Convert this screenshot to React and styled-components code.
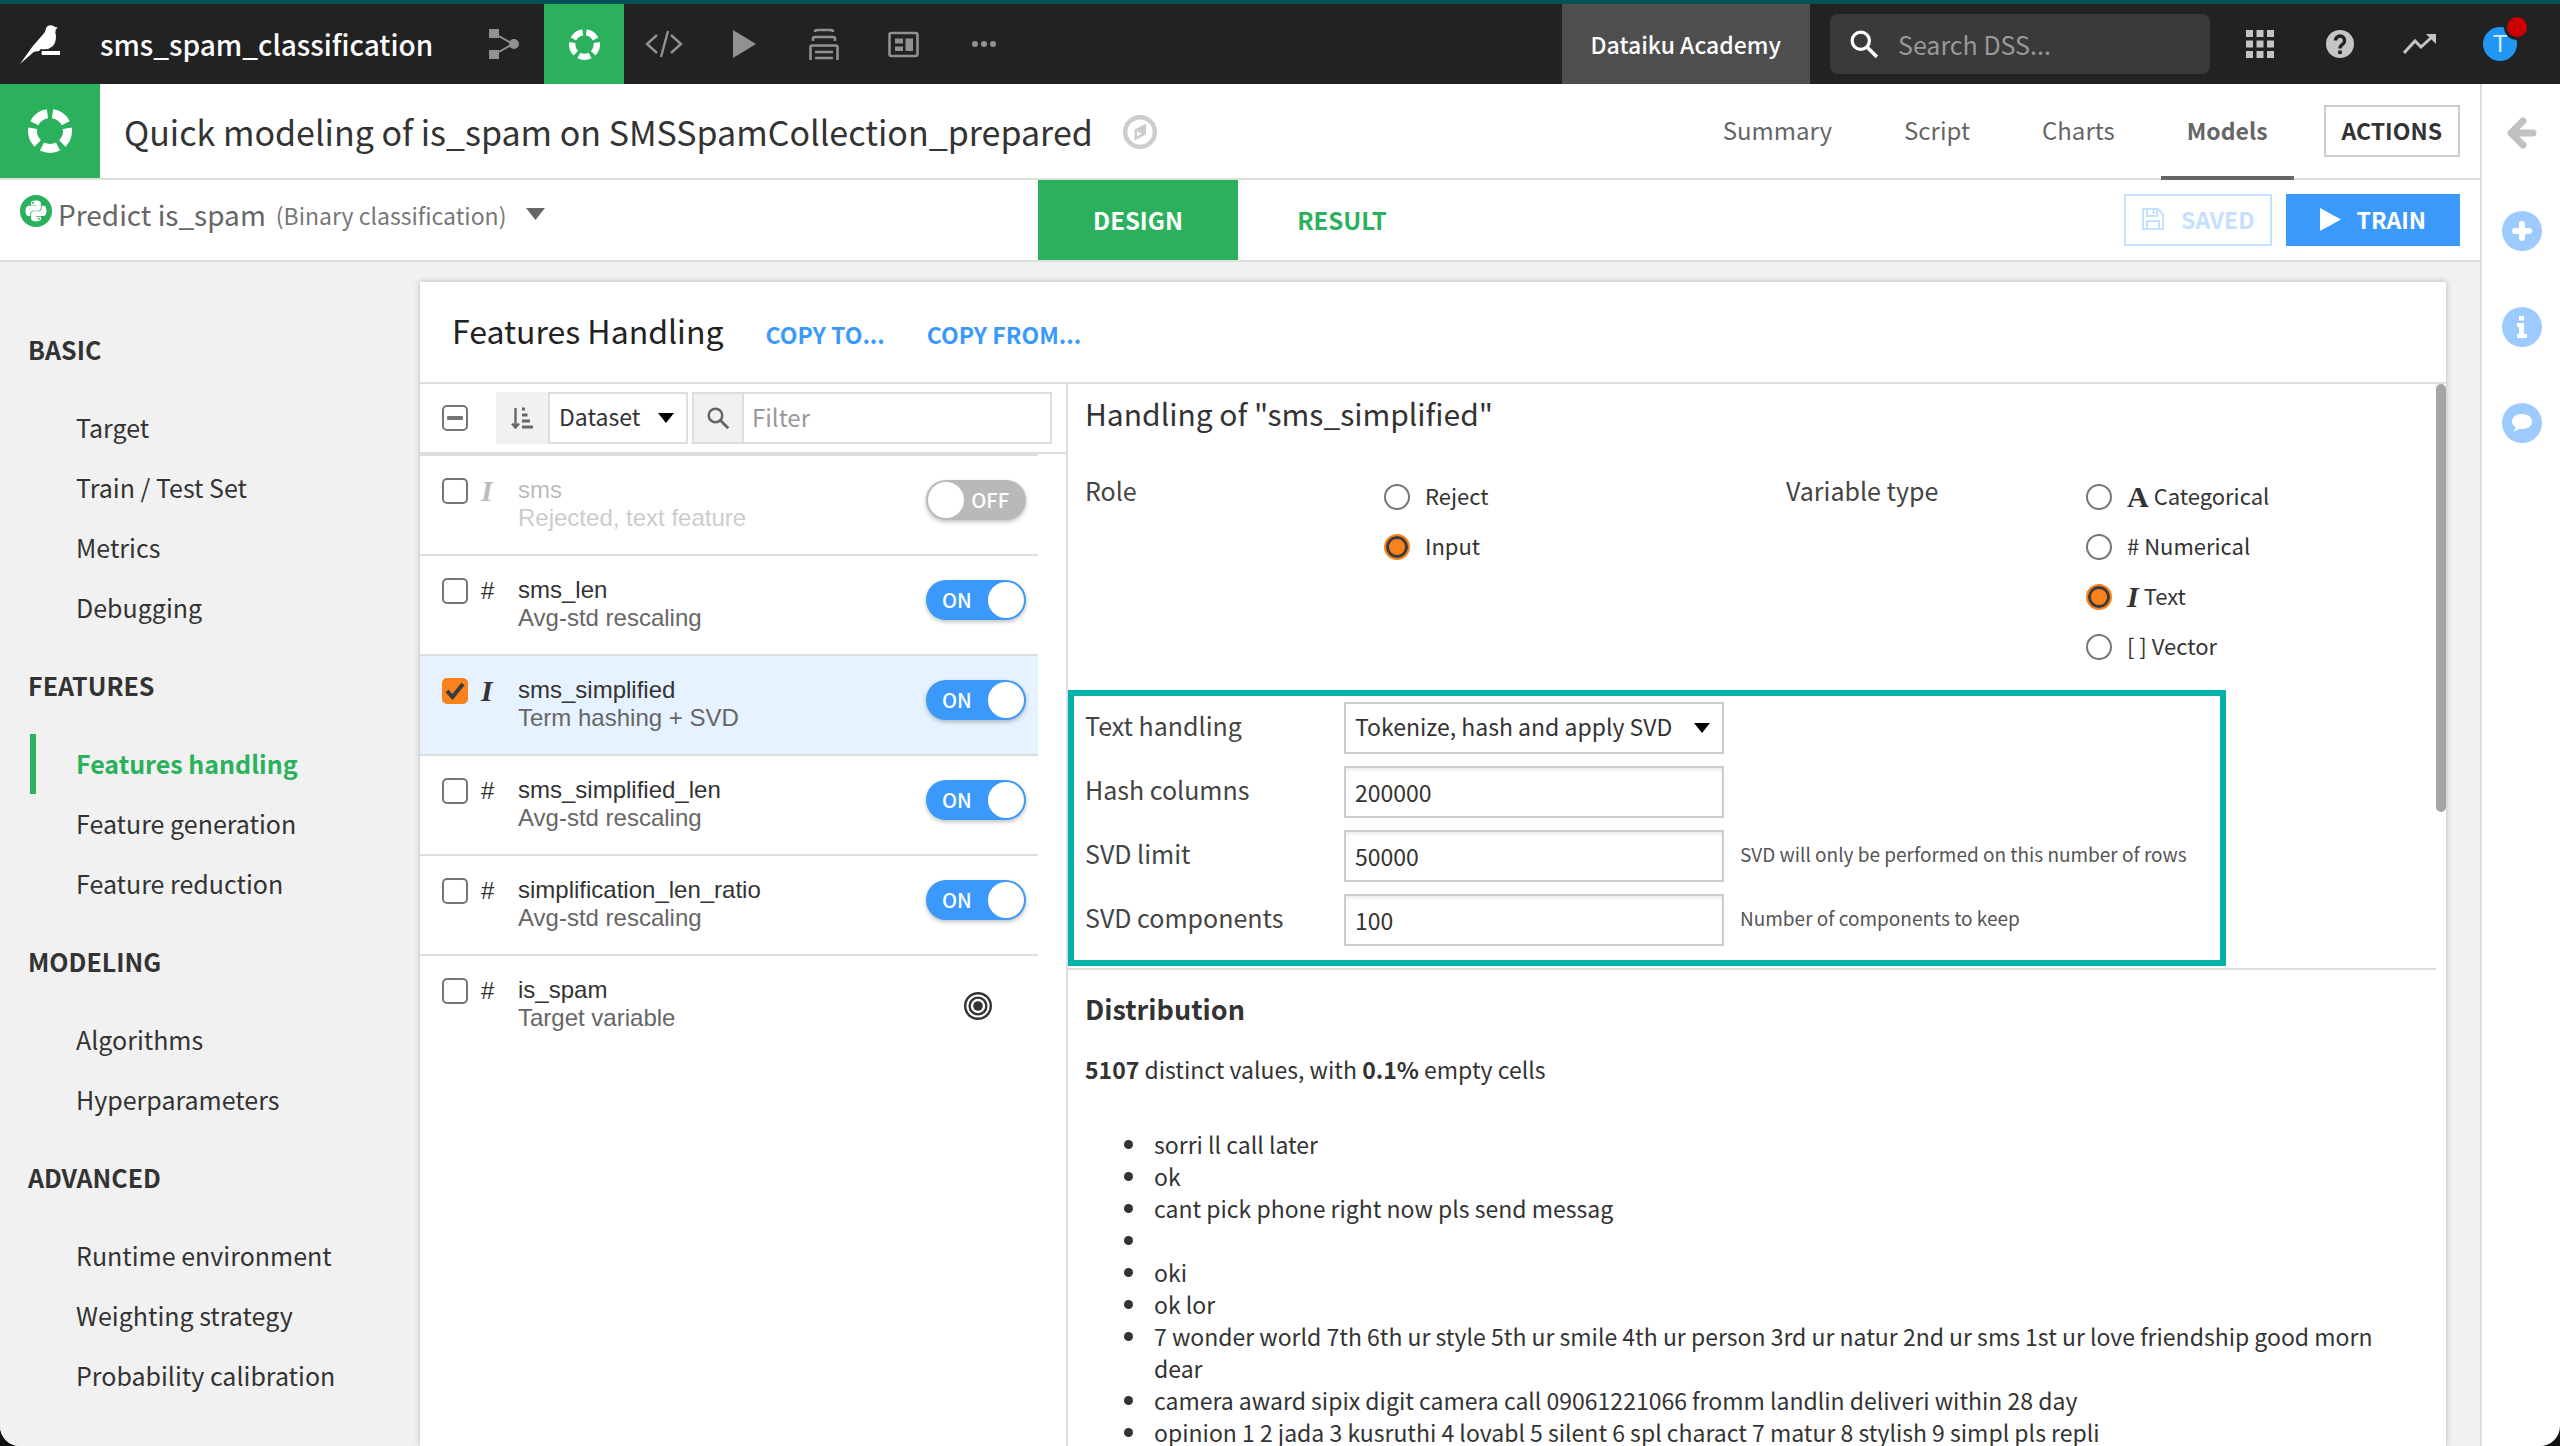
import React, { useState } from "react";
import styled, { createGlobalStyle, css } from "styled-components";
import { FaPython } from "react-icons/fa";

const sans = '"Noto Sans CJK SC", "Noto Sans", sans-serif';
const arial = '"Liberation Sans", Arial, sans-serif';
const serif = '"Liberation Serif", "Times New Roman", serif';

const green = "#2bb05c";
const blue = "#3b99fc";
const line = "#dddddd";
const ink = "#333333";

const GlobalStyle = createGlobalStyle`
  *, *::before, *::after { box-sizing: border-box; }
  body { margin: 0; background: #111111; }
  button, input, select { font: inherit; color: inherit; margin: 0; }
  button { cursor: pointer; }
  a { color: inherit; text-decoration: none; }
  h1, h2, h3, p, ul, fieldset { margin: 0; padding: 0; border: 0; font-weight: 400; }
  svg { display: block; flex: none; }
`;

const Window = styled.div`
  display: flex;
  flex-direction: column;
  height: 100vh;
  overflow: hidden;
  border-radius: 0 0 20px 20px;
  background: #ffffff;
  color: ${ink};
  font-family: ${sans};
  font-size: 25px;
  line-height: 32px;
`;

/* Top bar */

const TopBar = styled.header`
  flex: none;
  display: flex;
  align-items: stretch;
  height: 84px;
  padding-right: 20px;
  border-top: 4px solid #025258;
  background: #222222;
  color: #ffffff;
`;

const Brand = styled.a`
  display: flex;
  align-items: center;
  width: 100px;
  padding-left: 20px;
`;

const ProjectName = styled.a`
  display: flex;
  align-items: center;
  width: 364px;
  font-size: 28px;
  font-weight: 500;
`;

const NavButton = styled.a`
  display: flex;
  align-items: center;
  justify-content: center;
  width: 80px;
  color: ${(p) => (p.$active ? "#ffffff" : p.$light ? "#c4c4c4" : "#919191")};
  background: ${(p) => (p.$active ? green : "transparent")};
`;

const Instance = styled.div`
  display: flex;
  align-items: center;
  margin-left: auto;
  margin-right: 20px;
  padding: 0 29px;
  background: #4e4e4e;
  font-size: 23px;
  font-weight: 500;
`;

const GlobalSearch = styled.label`
  display: flex;
  align-items: center;
  gap: 20px;
  width: 380px;
  height: 60px;
  margin: 10px 10px 10px 0;
  padding: 0 20px;
  border-radius: 8px;
  background: #3a3a3a;

  input {
    flex: 1;
    min-width: 0;
    padding: 0;
    border: 0;
    outline: 0;
    background: none;
    font-size: 25px;
  }
  input::placeholder { color: #999999; opacity: 1; }
`;

const Avatar = styled.span`
  position: relative;
  display: flex;
  align-items: center;
  justify-content: center;
  width: 34px;
  height: 34px;
  border-radius: 50%;
  background: #2196f3;
  color: #d6ecff;
  font-family: ${arial};
  font-size: 24px;
`;

const AvatarDot = styled.span`
  position: absolute;
  top: -13px;
  right: -13px;
  width: 26px;
  height: 26px;
  border: 3px solid #222222;
  border-radius: 50%;
  background: #cc0000;
`;

/* Page */

const Page = styled.div`
  flex: 1;
  display: flex;
  min-height: 0;
`;

const Main = styled.main`
  flex: 1;
  display: flex;
  flex-direction: column;
  min-width: 0;
  border-right: 2px solid ${line};
`;

const TitleBar = styled.div`
  flex: none;
  display: flex;
  align-items: stretch;
  height: 96px;
  padding-right: 20px;
  border-bottom: 2px solid ${line};
`;

const TitleIcon = styled.div`
  display: flex;
  align-items: center;
  justify-content: center;
  width: 100px;
  background: ${green};
  color: #ffffff;
`;

const Title = styled.h1`
  display: flex;
  align-items: center;
  gap: 30px;
  padding: 2px 0 0 24px;
  font-size: 34px;
  line-height: 48px;
  white-space: nowrap;
`;

const Tabs = styled.nav`
  display: flex;
  gap: 20px;
  margin: 0 30px -2px auto;
`;

const Tab = styled.a`
  display: flex;
  align-items: center;
  padding: 0 26px;
  border-bottom: 4px solid ${(p) => (p.$active ? "#666666" : "transparent")};
  color: #666666;
  font-size: ${(p) => (p.$active ? 23 : 24)}px;
  font-weight: ${(p) => (p.$active ? 700 : 400)};
`;

const Button = styled.button`
  display: flex;
  align-items: center;
  justify-content: center;
  align-self: center;
  gap: 16px;
  height: 52px;
  padding: 0 ${(p) => p.$pad || 16}px 2px;
  border: 2px solid #cccccc;
  background: #ffffff;
  font-size: 23px;
  font-weight: 700;

  ${(p) =>
    p.$kind === "saved" &&
    css`
      border-color: #c4e0fe;
      color: #c4e0fe;
    `}
  ${(p) =>
    p.$kind === "primary" &&
    css`
      border-color: ${blue};
      background: ${blue};
      color: #ffffff;
    `}
`;

const TaskBar = styled.div`
  flex: none;
  display: grid;
  grid-template-columns: 1fr auto 1fr;
  height: 82px;
  border-bottom: 2px solid ${line};
`;

const TaskPicker = styled.button`
  display: flex;
  align-items: center;
  justify-self: start;
  padding: 0 0 12px 20px;
  border: 0;
  background: none;
  color: #666666;
  font-size: 28px;

  small {
    margin: 2px 20px 0 10px;
    color: #777777;
    font-size: 23px;
  }
`;

const PythonBadge = styled.span`
  display: flex;
  align-items: center;
  justify-content: center;
  width: 32px;
  height: 32px;
  margin: 0 6px 6px 0;
  border-radius: 50%;
  background: ${green};
  color: #ffffff;
`;

const ModeTabs = styled.div`
  display: flex;
  gap: 4px;
`;

const ModeTab = styled.button`
  width: 200px;
  border: 0;
  background: ${(p) => (p.$active ? green : "transparent")};
  color: ${(p) => (p.$active ? "#ffffff" : green)};
  font-size: 24px;
  font-weight: 700;
`;

const TaskActions = styled.div`
  display: flex;
  justify-content: flex-end;
  gap: 14px;
  padding-right: 20px;
`;

const SideRail = styled.aside`
  display: flex;
  flex-direction: column;
  align-items: center;
  gap: 56px;
  width: 78px;
  padding: 27px 0 0 2px;
`;

const RailButton = styled.button`
  display: flex;
  align-items: center;
  justify-content: center;
  width: 40px;
  height: 40px;
  padding: 0;
  border: 0;
  border-radius: 50%;
  background: ${(p) => (p.$plain ? "transparent" : "#9dcbff")};
  color: #ffffff;
`;

const RailTop = styled.div`
  display: flex;
  height: 44px;
  align-items: center;
`;

/* Body */

const Body = styled.div`
  flex: 1;
  display: flex;
  min-height: 0;
  padding-right: 34px;
  background: #f1f1f1;
`;

const Sidebar = styled.nav`
  flex: none;
  width: 420px;
  padding: 40px 0 0 30px;
  overflow: hidden;
`;

const SideHeading = styled.h2`
  height: 96px;
  font-size: 25px;
  font-weight: 700;
  line-height: 95px;
  margin-left: -2px;
`;

const SideLink = styled.a`
  display: block;
  height: 60px;
  padding-left: 40px;
  border-left: 6px solid ${(p) => (p.$active ? green : "transparent")};
  color: ${(p) => (p.$active ? green : "inherit")};
  font-weight: ${(p) => (p.$active ? 700 : 400)};
  line-height: 59px;
`;

const Card = styled.section`
  flex: 1;
  display: flex;
  flex-direction: column;
  min-width: 0;
  margin-top: 20px;
  background: #ffffff;
  box-shadow: 0 0 6px rgba(0, 0, 0, 0.25);
`;

const CardHeader = styled.div`
  flex: none;
  display: flex;
  align-items: baseline;
  gap: 42px;
  height: 102px;
  padding: 28px 32px 0;
  border-bottom: 2px solid ${line};
`;

const CardTitle = styled.h2`
  color: #222222;
  font-size: 32px;
  line-height: 40px;
`;

const TextButton = styled.button`
  padding: 0;
  border: 0;
  background: none;
  color: ${blue};
  font-size: 23px;
  font-weight: 700;
`;

const Split = styled.div`
  flex: 1;
  display: flex;
  min-height: 0;
`;

/* Feature list */

const FeaturePane = styled.div`
  flex: none;
  width: 648px;
  border-right: 2px solid ${line};
`;

const Toolbar = styled.div`
  display: flex;
  align-items: center;
  height: 70px;
  padding: 0 14px 0 22px;
  border-bottom: 2px solid ${line};
`;

const CheckWrap = styled.span`
  display: grid;
  flex: none;
  width: 26px;
  height: 26px;
  place-items: center;

  > * { grid-area: 1 / 1; }
  > svg { pointer-events: none; z-index: 1; }
`;

const CheckInput = styled.input`
  appearance: none;
  width: 26px;
  height: 26px;
  border: 2px solid #767676;
  border-radius: 5px;
  background: #ffffff;

  &:checked {
    border-color: #f9821c;
    background: #f9821c;
  }
`;

const Addon = styled.span`
  flex: none;
  display: flex;
  align-items: center;
  justify-content: center;
  width: ${(p) => (p.$bordered ? 50 : 52)}px;
  height: 52px;
  border: ${(p) => (p.$bordered ? `2px solid ${line}` : "0")};
  border-right: 0;
  background: #f1f1f1;
  color: #666666;
`;

const SortGroup = styled.div`
  display: flex;
  margin: 0 4px 0 28px;
`;

const FilterGroup = styled.label`
  flex: 1;
  display: flex;
  min-width: 0;

  input {
    flex: 1;
    min-width: 0;
    height: 52px;
    padding: 0 8px 4px;
    border: 2px solid ${line};
    background: #ffffff;
    font-size: 24px;
  }
  input::placeholder { color: #999999; opacity: 1; }
`;

const SelectWrap = styled.span`
  display: grid;
  width: ${(p) => p.$width}px;
  align-items: center;

  > * { grid-area: 1 / 1; }
  > svg { justify-self: end; margin-right: 14px; pointer-events: none; }
`;

const Select = styled.select`
  appearance: none;
  width: 100%;
  height: 52px;
  padding: 0 36px 4px 9px;
  border: 2px solid ${(p) => p.$border || line};
  border-radius: 0;
  background: #ffffff;
  font-size: 23px;
`;

const FeatureList = styled.ul`
  list-style: none;
  margin-right: 28px;
`;

const FeatureRow = styled.li`
  display: flex;
  align-items: flex-start;
  height: 100px;
  padding: 22px 12px 0 22px;
  background: ${(p) => (p.$selected ? "#e6f2ff" : "transparent")};
  color: ${(p) => (p.$off ? "#bbbbbb" : ink)};
  font-family: ${arial};
  font-size: 24px;
  line-height: 28px;
  border-top: 2px solid ${line};
`;

const TypeMark = styled.span`
  flex: none;
  width: 50px;
  padding-left: 13px;
  font-family: ${(p) => (p.$serif ? serif : arial)};
  font-size: ${(p) => (p.$serif ? 30 : 24)}px;
  font-style: ${(p) => (p.$serif ? "italic" : "normal")};
  font-weight: ${(p) => (p.$serif ? 700 : 400)};
  line-height: 26px;
`;

const FeatureText = styled.div`
  flex: 1;
  min-width: 0;
  margin-top: -2px;

  small {
    display: block;
    font-size: 24px;
    color: ${(p) => (p.$off ? "#cccccc" : "#666666")};
  }
`;

const Toggle = styled.label`
  flex: none;
  display: flex;
  align-items: center;
  justify-content: space-between;
  flex-direction: ${(p) => (p.$on ? "row" : "row-reverse")};
  width: 100px;
  height: 40px;
  margin-top: 2px;
  padding: 2px ${(p) => (p.$on ? 2 : 17)}px 2px ${(p) => (p.$on ? 16 : 2)}px;
  border-radius: 20px;
  background: ${(p) => (p.$on ? blue : "#b9b9b9")};
  box-shadow: 0 2px 4px rgba(0, 0, 0, 0.25);
  color: #ffffff;
  font-family: ${sans};
  font-size: 20px;
  font-weight: 500;

  input {
    appearance: none;
    width: 36px;
    height: 36px;
    border-radius: 50%;
    background: #ffffff;
  }
`;

const TargetMark = styled.span`
  margin: 14px 34px 0 0;
`;

/* Detail pane */

const Detail = styled.div`
  position: relative;
  flex: 1;
  min-width: 0;
  overflow: hidden;
  padding-right: 10px;
`;

const ScrollThumb = styled.span`
  position: absolute;
  top: 0;
  right: 0;
  width: 10px;
  height: 428px;
  border-radius: 5px;
  background: #a5a5a5;
`;

const DetailTitle = styled.h2`
  padding: 9px 17px 39px;
  font-size: 30px;
  line-height: 40px;
`;

const Roles = styled.div`
  display: grid;
  grid-template-columns: 299px 402px 300px 1fr;
  min-height: 218px;
  padding-left: 17px;
`;

const FieldName = styled.span`
  padding-top: 2px;
  color: #444444;
`;

const RadioOption = styled.label`
  display: flex;
  align-items: center;
  height: 50px;
  font-size: 22px;

  input {
    appearance: none;
    width: 26px;
    height: 26px;
    margin-right: 15px;
    border: 2px solid #767676;
    border-radius: 50%;
    background: #ffffff;
  }
  input:checked {
    border-color: #f9821c;
    background: #f9821c;
    box-shadow: inset 0 0 0 3px #3c3c3c;
  }
  b {
    margin-right: 5px;
    font-family: ${serif};
    font-size: 30px;
  }
  i { font-style: italic; }
  span { padding-bottom: 4px; white-space: pre; }
`;

const Highlight = styled.div`
  display: flex;
  flex-direction: column;
  gap: 12px;
  max-width: 1158px;
  padding: 6px 11px 14px;
  border: 6px solid #00b2a9;
`;

const FormRow = styled.div`
  display: grid;
  grid-template-columns: 259px 380px 1fr;
  align-items: center;

  label { padding-bottom: 6px; color: #444444; }
`;

const TextInput = styled.input`
  width: 100%;
  height: 52px;
  padding: 0 9px;
  border: 2px solid #cccccc;
  background: #ffffff;
  box-shadow: inset 0 2px 3px rgba(0, 0, 0, 0.08);
  font-size: 23px;
`;

const Hint = styled.span`
  padding: 0 0 4px 16px;
  color: #555555;
  font-size: 19px;
`;

const Distribution = styled.section`
  margin-top: 2px;
  padding: 19px 10px 0 17px;
  border-top: 2px solid ${line};
  font-size: 23px;

  h3 {
    margin-bottom: 24px;
    font-size: 27px;
    font-weight: 700;
    line-height: 40px;
  }
  b { font-weight: 700; }
  ul {
    margin-top: 43px;
    padding-left: 64px;
  }
  li {
    min-height: 32px;
    padding-left: 5px;
  }
`;

/* Icons */

const Bird = () => (
  <svg width="40" height="39" viewBox="30 24 120 117" fill="#fff" aria-hidden="true">
    <path d="M30 141 L62 96 Q70 84 80 74 L100 51 Q106 44 107 38 Q109 25 122 24.500 Q130 24.500 134 29 L143 32 L137 38 Q135 46 138 58 Q138 78 128 88 Q118 97 104 97 L90 97 L88 102 L72 104 Z" />
    <path d="M95 102h55v12H95z" />
  </svg>
);

const Ring = ({ size }) => (
  <svg width={size} height={size} viewBox="0 0 44 44" fill="none" aria-hidden="true">
    <circle
      cx="22" cy="22" r="17.500" stroke="currentColor" strokeWidth="9"
      pathLength="100" strokeDasharray="15.200 4.800" strokeDashoffset="-2.400"
      transform="rotate(-90 22 22)"
    />
  </svg>
);

const FlowIcon = () => (
  <svg width="32" height="32" viewBox="0 0 32 32" fill="currentColor" aria-hidden="true">
    <path d="M1 1h10v9H1zM1 22h10v9H1z" />
    <path d="M9 7 25 16 9 25" fill="none" stroke="currentColor" strokeWidth="2" />
    <circle cx="26" cy="16" r="5" />
  </svg>
);

const CodeIcon = () => (
  <svg width="38" height="28" viewBox="0 0 38 28" fill="none" stroke="currentColor" strokeWidth="2.400" aria-hidden="true">
    <path d="M12 5 2 14l10 9M26 5l10 9-10 9M23 1l-7 26" />
  </svg>
);

const PlayIcon = ({ w, h }) => (
  <svg width={w} height={h} viewBox="0 0 22 28" preserveAspectRatio="none" fill="currentColor" aria-hidden="true">
    <path d="M0 0 22 14 0 28z" />
  </svg>
);

const JobsIcon = () => (
  <svg width="32" height="32" viewBox="0 0 32 32" fill="none" stroke="currentColor" strokeWidth="2.600" aria-hidden="true">
    <path d="M7 4Q7 2 9 2h14q2 0 2 2M5 13v-2q0-2 2-2h18q2 0 2 2v2M2.500 32V19q0-1.500 2-1.500h23q2 0 2 1.500v13" />
    <path d="M7 24h18M7 30h18" />
  </svg>
);

const DashboardIcon = () => (
  <svg width="32" height="28" viewBox="0 0 32 28" aria-hidden="true">
    <rect x="1.500" y="3" width="28" height="23" rx="2" fill="none" stroke="currentColor" strokeWidth="2.600" />
    <path d="M7 8.500h8v5H7zM7 16.500h8v4.500H7zM17.500 8.500H25V21h-7.500z" fill="currentColor" />
  </svg>
);

const DotsIcon = () => (
  <svg width="24" height="8" viewBox="0 0 24 8" fill="currentColor" aria-hidden="true">
    <circle cx="3" cy="4" r="3" /><circle cx="12" cy="4" r="3" /><circle cx="21" cy="4" r="3" />
  </svg>
);

const SearchIcon = ({ size }) => (
  <svg width={size} height={size} viewBox="0 0 26 26" fill="none" stroke="currentColor" aria-hidden="true">
    <circle cx="10" cy="10" r="8" strokeWidth="3" />
    <path d="m16 16 9 9" strokeWidth="3.400" />
  </svg>
);

const AppsIcon = () => (
  <svg width="28" height="28" viewBox="0 0 28 28" fill="currentColor" aria-hidden="true">
    {[0, 10.5, 21].map((y) =>
      [0, 10.5, 21].map((x) => <rect key={`${x}-${y}`} x={x} y={y} width="7" height="7" />)
    )}
  </svg>
);

const HelpIcon = () => (
  <svg width="28" height="28" viewBox="0 0 28 28" aria-hidden="true">
    <circle cx="14" cy="14" r="14" fill="currentColor" />
    <path d="M9.500 10.500a4.500 4.500 0 1 1 7 3.800Q14 16 14 18.500" fill="none" stroke="#222" strokeWidth="3.400" />
    <rect x="12.200" y="20.500" width="3.600" height="3.600" fill="#222" />
  </svg>
);

const TrendIcon = () => (
  <svg width="34" height="22" viewBox="0 0 34 22" aria-hidden="true">
    <path d="m1 20 11-12 6 6L29 4" fill="none" stroke="currentColor" strokeWidth="3" />
    <path d="M23 1h10v10z" fill="currentColor" />
  </svg>
);

const CompassIcon = () => (
  <svg width="34" height="34" viewBox="0 0 34 34" aria-hidden="true">
    <circle cx="17" cy="17" r="14.800" fill="none" stroke="#ccc" strokeWidth="4.400" />
    <path fillRule="evenodd" d="M23 8.500v11L11.500 25.500v-11zM14 16v5.500l4.500-2.800z" fill="#ccc" />
  </svg>
);

const Caret = ({ w = 16, h = 10, fill = "#000" }) => (
  <svg width={w} height={h} viewBox="0 0 16 10" fill={fill} aria-hidden="true">
    <path d="M0 0h16L8 10z" />
  </svg>
);

const SaveIcon = () => (
  <svg width="24" height="24" viewBox="0 0 24 24" fill="none" stroke="currentColor" strokeWidth="2" aria-hidden="true">
    <path d="M2 2h15l5 5v15H2z" />
    <path d="M6 2v7h10V2M6 22v-8h12v8M12.500 3v4" />
  </svg>
);

const BackArrow = () => (
  <svg width="30" height="32" viewBox="0 0 30 32" fill="none" stroke="#c1c1c1" strokeWidth="7" strokeLinecap="round" strokeLinejoin="round" aria-hidden="true">
    <path d="M16 4 4 16l12 12M6 16h20" />
  </svg>
);

const PlusIcon = () => (
  <svg width="20" height="20" viewBox="0 0 20 20" stroke="currentColor" strokeWidth="6" strokeLinecap="round" aria-hidden="true">
    <path d="M10 3v14M3 10h14" />
  </svg>
);

const InfoIcon = () => (
  <svg width="12" height="22" viewBox="0 0 12 22" fill="currentColor" aria-hidden="true">
    <path d="M3 0h5v4.500H3zM1 7h7v11h3v4H1v-4h2v-7H1z" />
  </svg>
);

const ChatIcon = () => (
  <svg width="22" height="20" viewBox="0 0 22 20" fill="currentColor" aria-hidden="true">
    <path d="M11 1c6 0 10 3 10 7.500S17 16 11 16q-1.500 0-2.500-.3Q6 18 2.500 18.500 4.500 16.500 4.500 14 1 12 1 8.500C1 4 5 1 11 1z" />
  </svg>
);

const SortIcon = () => (
  <svg width="22" height="22" viewBox="0 0 22 22" fill="none" stroke="currentColor" strokeWidth="2.400" aria-hidden="true">
    <path d="M4.500 1v19M1 16.500l3.500 4 3.500-4" />
    <path d="M11 2h3M11 8h5.500M11 14h8M11 20h11" strokeWidth="3" />
  </svg>
);

const CheckIcon = () => (
  <svg width="20" height="18" viewBox="0 0 20 18" fill="none" stroke="#3c3c3c" strokeWidth="4" aria-hidden="true">
    <path d="m2 9 5.500 6L18 2" />
  </svg>
);

const MinusIcon = () => (
  <svg width="16" height="4" viewBox="0 0 16 4" fill="#767676" aria-hidden="true">
    <rect width="16" height="4" rx="1" />
  </svg>
);

const TargetIcon = () => (
  <svg width="28" height="28" viewBox="0 0 28 28" fill="none" stroke="#333" role="img" aria-label="Target">
    <circle cx="14" cy="14" r="12.800" strokeWidth="2.400" />
    <circle cx="14" cy="14" r="8.400" strokeWidth="2.400" />
    <circle cx="14" cy="14" r="4.800" fill="#333" stroke="none" />
  </svg>
);

/* Data */

const sections = [
  ["BASIC", ["Target", "Train / Test Set", "Metrics", "Debugging"]],
  ["FEATURES", ["Features handling", "Feature generation", "Feature reduction"]],
  ["MODELING", ["Algorithms", "Hyperparameters"]],
  ["ADVANCED", ["Runtime environment", "Weighting strategy", "Probability calibration"]],
];

const features = [
  { name: "sms", info: "Rejected, text feature", type: "I", on: false },
  { name: "sms_len", info: "Avg-std rescaling", type: "#", on: true },
  { name: "sms_simplified", info: "Term hashing + SVD", type: "I", on: true, selected: true },
  { name: "sms_simplified_len", info: "Avg-std rescaling", type: "#", on: true },
  { name: "simplification_len_ratio", info: "Avg-std rescaling", type: "#", on: true },
  { name: "is_spam", info: "Target variable", type: "#", target: true },
];

const fields = [
  { id: "hash", label: "Hash columns", value: "200000" },
  { id: "limit", label: "SVD limit", value: "50000", hint: "SVD will only be performed on this number of rows" },
  { id: "components", label: "SVD components", value: "100", hint: "Number of components to keep" },
];

const samples = [
  "sorri ll call later",
  "ok",
  "cant pick phone right now pls send messag",
  "",
  "oki",
  "ok lor",
  "7 wonder world 7th 6th ur style 5th ur smile 4th ur person 3rd ur natur 2nd ur sms 1st ur love friendship good morn dear",
  "camera award sipix digit camera call 09061221066 fromm landlin deliveri within 28 day",
  "opinion 1 2 jada 3 kusruthi 4 lovabl 5 silent 6 spl charact 7 matur 8 stylish 9 simpl pls repli",
];

const variableTypes = [
  { label: "Categorical", mark: <b>A</b> },
  { label: "# Numerical" },
  { label: "Text", mark: <b><i>I</i></b> },
  { label: "[ ] Vector" },
];

function Feature({ feature }) {
  const { name, info, type, target, selected } = feature;
  const [checked, setChecked] = useState(Boolean(selected));
  const [on, setOn] = useState(feature.on);
  const off = on === false;
  return (
    <FeatureRow $selected={checked} $off={off}>
      <CheckWrap>
        <CheckInput
          type="checkbox"
          aria-label={`Select ${name}`}
          checked={checked}
          onChange={(e) => setChecked(e.target.checked)}
        />
        {checked && <CheckIcon />}
      </CheckWrap>
      <TypeMark $serif={type === "I"}>{type}</TypeMark>
      <FeatureText $off={off}>
        {name}
        <small>{info}</small>
      </FeatureText>
      {target ? (
        <TargetMark><TargetIcon /></TargetMark>
      ) : (
        <Toggle $on={on}>
          <span>{on ? "ON" : "OFF"}</span>
          <input type="checkbox" role="switch" checked={on} onChange={(e) => setOn(e.target.checked)} />
        </Toggle>
      )}
    </FeatureRow>
  );
}

export default function App() {
  return (
    <Window>
      <GlobalStyle />
      <TopBar>
        <Brand href="#" aria-label="Home"><Bird /></Brand>
        <ProjectName href="#">sms_spam_classification</ProjectName>
        <NavButton href="#" aria-label="Flow"><FlowIcon /></NavButton>
        <NavButton href="#" aria-label="Lab" $active><Ring size={31} /></NavButton>
        <NavButton href="#" aria-label="Code"><CodeIcon /></NavButton>
        <NavButton href="#" aria-label="Run"><PlayIcon w={23} h={28} /></NavButton>
        <NavButton href="#" aria-label="Jobs"><JobsIcon /></NavButton>
        <NavButton href="#" aria-label="Dashboards"><DashboardIcon /></NavButton>
        <NavButton href="#" aria-label="More"><DotsIcon /></NavButton>
        <Instance>Dataiku Academy</Instance>
        <GlobalSearch>
          <SearchIcon size={28} />
          <input type="text" placeholder="Search DSS..." aria-label="Search DSS" />
        </GlobalSearch>
        <NavButton href="#" aria-label="Applications" $light><AppsIcon /></NavButton>
        <NavButton href="#" aria-label="Help" $light><HelpIcon /></NavButton>
        <NavButton href="#" aria-label="Activity" $light><TrendIcon /></NavButton>
        <NavButton href="#" aria-label="Profile" $light>
          <Avatar>T<AvatarDot /></Avatar>
        </NavButton>
      </TopBar>

      <Page>
        <Main>
          <TitleBar>
            <TitleIcon><Ring size={44} /></TitleIcon>
            <Title>
              Quick modeling of is_spam on SMSSpamCollection_prepared
              <CompassIcon />
            </Title>
            <Tabs>
              <Tab href="#">Summary</Tab>
              <Tab href="#">Script</Tab>
              <Tab href="#">Charts</Tab>
              <Tab href="#" $active>Models</Tab>
            </Tabs>
            <Button>ACTIONS</Button>
          </TitleBar>

          <TaskBar>
            <TaskPicker>
              <PythonBadge><FaPython size={24} aria-hidden="true" /></PythonBadge>
              Predict is_spam
              <small>(Binary classification)</small>
              <Caret w={19} h={12} fill="#666" />
            </TaskPicker>
            <ModeTabs>
              <ModeTab $active>DESIGN</ModeTab>
              <ModeTab>RESULT</ModeTab>
            </ModeTabs>
            <TaskActions>
              <Button $kind="saved" $pad={15}><SaveIcon />SAVED</Button>
              <Button $kind="primary" $pad={32}><PlayIcon w={21} h={23} />TRAIN</Button>
            </TaskActions>
          </TaskBar>

          <Body>
            <Sidebar>
              {sections.map(([heading, links]) => (
                <React.Fragment key={heading}>
                  <SideHeading>{heading}</SideHeading>
                  {links.map((l) => (
                    <SideLink key={l} href="#" $active={l === "Features handling"}>{l}</SideLink>
                  ))}
                </React.Fragment>
              ))}
            </Sidebar>

            <Card>
              <CardHeader>
                <CardTitle>Features Handling</CardTitle>
                <TextButton>COPY TO...</TextButton>
                <TextButton>COPY FROM...</TextButton>
              </CardHeader>
              <Split>
                <FeaturePane>
                  <Toolbar>
                    <CheckWrap>
                      <CheckInput type="checkbox" aria-label="Select all" />
                      <MinusIcon />
                    </CheckWrap>
                    <SortGroup>
                      <Addon><SortIcon /></Addon>
                      <SelectWrap $width={140}>
                        <Select aria-label="Sort by" defaultValue="Dataset">
                          <option>Dataset</option>
                          <option>Name</option>
                        </Select>
                        <Caret />
                      </SelectWrap>
                    </SortGroup>
                    <FilterGroup>
                      <Addon $bordered><SearchIcon size={22} /></Addon>
                      <input type="text" placeholder="Filter" aria-label="Filter features" />
                    </FilterGroup>
                  </Toolbar>
                  <FeatureList>
                    {features.map((f) => <Feature key={f.name} feature={f} />)}
                  </FeatureList>
                </FeaturePane>

                <Detail>
                  <DetailTitle>Handling of "sms_simplified"</DetailTitle>
                  <Roles>
                    <FieldName>Role</FieldName>
                    <fieldset aria-label="Role">
                      <RadioOption><input type="radio" name="role" /><span>Reject</span></RadioOption>
                      <RadioOption><input type="radio" name="role" defaultChecked /><span>Input</span></RadioOption>
                    </fieldset>
                    <FieldName>Variable type</FieldName>
                    <fieldset aria-label="Variable type">
                      {variableTypes.map((v) => (
                        <RadioOption key={v.label}>
                          <input type="radio" name="vartype" defaultChecked={v.label === "Text"} />
                          {v.mark}
                          <span>{v.label}</span>
                        </RadioOption>
                      ))}
                    </fieldset>
                  </Roles>
                  <Highlight>
                    <FormRow>
                      <label htmlFor="handling">Text handling</label>
                      <SelectWrap $width={380}>
                        <Select id="handling" $border="#cccccc" defaultValue="svd">
                          <option value="svd">Tokenize, hash and apply SVD</option>
                          <option value="hash">Tokenize and hash</option>
                        </Select>
                        <Caret />
                      </SelectWrap>
                    </FormRow>
                    {fields.map((f) => (
                      <FormRow key={f.id}>
                        <label htmlFor={f.id}>{f.label}</label>
                        <TextInput id={f.id} type="text" defaultValue={f.value} />
                        {f.hint && <Hint>{f.hint}</Hint>}
                      </FormRow>
                    ))}
                  </Highlight>
                  <Distribution>
                    <h3>Distribution</h3>
                    <p><b>5107</b> distinct values, with <b>0.1%</b> empty cells</p>
                    <ul>
                      {samples.map((s, i) => <li key={i}>{s}</li>)}
                    </ul>
                  </Distribution>
                  <ScrollThumb />
                </Detail>
              </Split>
            </Card>
          </Body>
        </Main>

        <SideRail>
          <RailTop>
            <RailButton $plain aria-label="Collapse"><BackArrow /></RailButton>
          </RailTop>
          <RailButton aria-label="Add"><PlusIcon /></RailButton>
          <RailButton aria-label="Information"><InfoIcon /></RailButton>
          <RailButton aria-label="Discussions"><ChatIcon /></RailButton>
        </SideRail>
      </Page>
    </Window>
  );
}
